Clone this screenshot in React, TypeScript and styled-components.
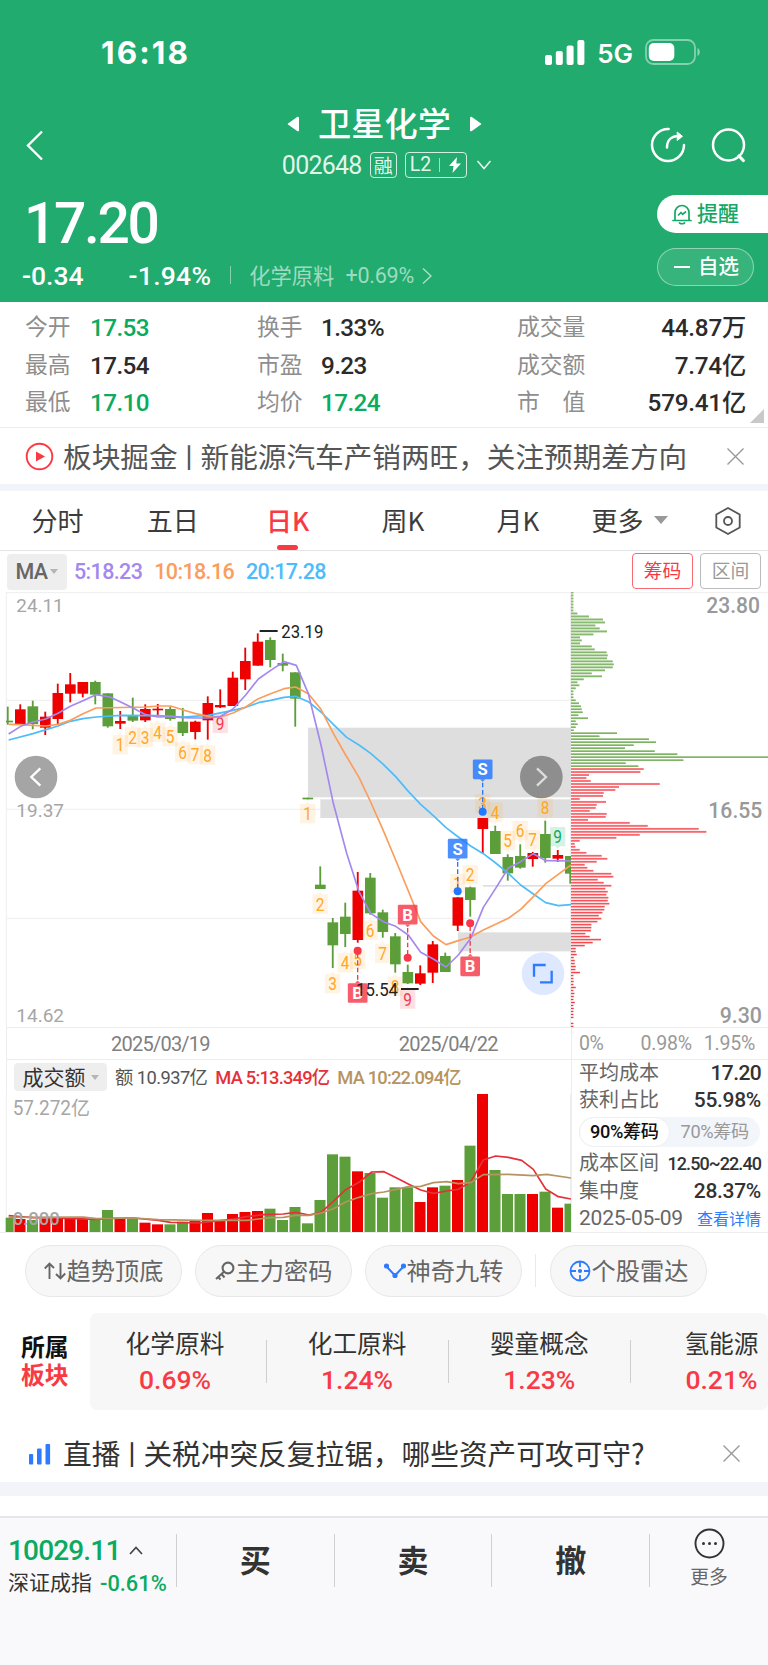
import React from 'react';
import styled, { createGlobalStyle } from 'styled-components';

const CJK = `"Noto Sans CJK SC", sans-serif`;
const DIGITS = `Roboto, "Noto Sans CJK SC", sans-serif`;

const C = {
  header: '#21ab6e',
  up: '#f93a45',
  down: '#0aab60',
  candleUp: '#ee0000',
  candleDown: '#5c9e3a',
  ink: '#333333',
  mid: '#666666',
  soft: '#8e8e8e',
  line: '#ededee',
  band: '#f2f4f9',
  blue: '#2e7bff',
  ma5: '#a488ee',
  ma10: '#fb9d5c',
  ma20: '#4cbcfb',
};

const GlobalStyle = createGlobalStyle`
  * { box-sizing: border-box; }
  body { margin: 0; background: #fff; }
  svg { display: block; flex: none; }
`;

const Screen = styled.div`
  width: 768px;
  height: 1665px;
  overflow: hidden;
  display: flex;
  flex-direction: column;
  background: #fff;
  font-family: ${CJK};
  color: ${C.ink};
  white-space: nowrap;
`;

const Num = styled.span<{ $size: number; $weight?: number; $color?: string; $ls?: number }>`
  font-family: ${DIGITS};
  font-size: ${(p) => p.$size}px;
  font-weight: ${(p) => p.$weight ?? 500};
  line-height: 1;
  letter-spacing: ${(p) => p.$ls ?? -0.03}em;
  color: ${(p) => p.$color ?? 'inherit'};
`;

/* ---------- header ---------- */

const Header = styled.header`
  height: 302px;
  background: ${C.header};
  color: #fff;
  display: flex;
  flex-direction: column;
`;

const StatusBar = styled.div`
  height: 104px;
  display: flex;
  justify-content: space-between;
  align-items: center;
  padding: 0 66px 0 101px;
  font-family: Inter, sans-serif;
`;

const Clock = styled.span`
  font-size: 31.5px;
  font-weight: 700;
  letter-spacing: 2.1px;
`;

const StatusRight = styled.div`
  display: flex;
  align-items: center;
`;

const Network = styled.span`
  font-size: 26px;
  font-weight: 600;
  margin: 2px 12px 0 12px;
`;

const NavBar = styled.div`
  height: 83px;
  display: flex;
  justify-content: space-between;
  align-items: stretch;
  padding: 0 22px 0 25px;
`;

const NavSide = styled.div`
  width: 96px;
  display: flex;
  align-items: center;
  justify-content: space-between;
  padding-bottom: 1px;
`;

const TitleBlock = styled.div`
  display: flex;
  flex-direction: column;
  align-items: center;
  margin-right: 2px;
`;

const TitleRow = styled.div`
  height: 40px;
  display: flex;
  align-items: center;
  gap: 18px;
  font-size: 33.2px;
  line-height: 40px;
  font-weight: 500;
`;

const TitleText = styled.span`
  margin-top: -4px;
`;

const CodeRow = styled.div`
  height: 42px;
  display: flex;
  align-items: center;
  gap: 8px;
  margin: 0 -5px 0 0;
`;

const Badge = styled.span<{ $pad: number }>`
  height: 26px;
  border: 1.3px solid rgba(255, 255, 255, 0.8);
  border-radius: 4px;
  display: flex;
  align-items: center;
  gap: 8px;
  padding: 0 ${(p) => p.$pad}px;
  font-size: 19px;
  line-height: 24px;
  color: rgba(255, 255, 255, 0.9);
`;

const BadgeRule = styled.i`
  width: 1px;
  height: 14px;
  background: rgba(255, 255, 255, 0.6);
`;

const ChevronSlot = styled.span`
  margin-left: 1px;
`;

const QuoteRow = styled.div`
  flex: 1;
  display: flex;
  justify-content: space-between;
`;

const Quote = styled.div`
  display: flex;
  flex-direction: column;
  padding-left: 22px;
`;

const Price = styled.div`
  height: 71px;
  display: flex;
  align-items: center;
  padding: 1px 0 0 2px;
`;

const ChangeRow = styled.div`
  height: 36px;
  display: flex;
  align-items: center;
`;

const Spacer = styled.i<{ $w: number }>`
  width: ${(p) => p.$w}px;
  flex: none;
`;

const FaintRule = styled.i`
  width: 1px;
  height: 18px;
  background: rgba(255, 255, 255, 0.45);
  margin: 0 18px 2px 19px;
`;

const Industry = styled.span`
  font-size: 21.3px;
  font-weight: 400;
  color: rgba(255, 255, 255, 0.58);
  margin-right: 11px;
  line-height: 28px;
  margin-bottom: 3px;
`;

const Actions = styled.div`
  width: 111px;
  display: flex;
  flex-direction: column;
  gap: 15px;
  padding-top: 8px;
`;

const AlertButton = styled.button`
  height: 38px;
  border: 0;
  border-radius: 19px 0 0 19px;
  background: #fff;
  color: #14a866;
  display: flex;
  align-items: center;
  gap: 5px;
  padding: 0 0 0 15px;
  font: 500 21px/34px ${CJK};
`;

const WatchButton = styled.button`
  width: 97px;
  height: 38px;
  border: 1.3px solid rgba(255, 255, 255, 0.45);
  border-radius: 19px;
  background: rgba(255, 255, 255, 0.1);
  color: #fff;
  display: flex;
  align-items: center;
  gap: 8px;
  padding: 0 0 0 16px;
  font: 500 20.5px/32px ${CJK};
`;

const ButtonText = styled.span`
  margin-top: -4px;
`;

const Dash = styled.i`
  width: 16px;
  height: 2px;
  background: #fff;
`;

/* ---------- statistics ---------- */

const Stats = styled.section`
  position: relative;
  height: 126px;
  border-bottom: 1px solid ${C.line};
  display: grid;
  grid-template-columns: 65px 167px 64px 196px 1fr;
  grid-auto-rows: 37.5px;
  padding: 6px 22px 0 25px;
`;

const StatLabel = styled.span`
  font-size: 22.8px;
  line-height: 35px;
  color: ${C.soft};
`;

const StatValue = styled.span<{ $tone?: string; $ls?: number }>`
  font: 500 24.3px/39px ${DIGITS};
  letter-spacing: ${(p) => p.$ls ?? -0.025}em;
  color: ${(p) => p.$tone ?? '#2b2b2b'};
`;

const LastCell = styled.span`
  display: flex;
  justify-content: space-between;
`;

const Corner = styled.i`
  position: absolute;
  right: 4px;
  bottom: 4px;
  border-left: 14px solid transparent;
  border-bottom: 14px solid #c9c9c9;
`;

/* ---------- notices ---------- */

const Notice = styled.div<{ $h: number; $tone: string; $top?: number; $size?: number }>`
  height: ${(p) => p.$h}px;
  display: flex;
  align-items: center;
  padding: ${(p) => p.$top ?? 0}px 0 0 25px;
  color: ${(p) => p.$tone};
  font-size: ${(p) => p.$size ?? 28.7}px;
  line-height: 40px;
`;

const NoticeIcon = styled.span`
  width: 38px;
  display: flex;
`;

const NoticeText = styled.span`
  flex: 1;
`;

const Bar = styled.span`
  display: inline-flex;
  justify-content: center;
  width: 23px;
  font-size: 27px;
`;

const CloseSlot = styled.span<{ $right: number }>`
  margin-right: ${(p) => p.$right}px;
`;

const Band = styled.div<{ $h: number }>`
  height: ${(p) => p.$h}px;
  background: ${C.band};
`;

/* ---------- tabs ---------- */

const Tabs = styled.nav`
  height: 60px;
  border-bottom: 1px solid #e4e4e6;
  display: flex;
`;

const Tab = styled.div<{ $active?: boolean }>`
  width: 115.1px;
  display: flex;
  flex-direction: column;
  align-items: center;
  justify-content: space-between;
  font-size: 26px;
  line-height: 58px;
  color: ${(p) => (p.$active ? C.up : '#3c3c3c')};
  font-weight: ${(p) => (p.$active ? 500 : 400)};
  &::after {
    content: '';
    width: 21px;
    height: 5px;
    flex: none;
    border-radius: 2.5px;
    background: ${(p) => (p.$active ? C.up : 'transparent')};
    margin-top: -4px;
  }
`;

const MoreTab = styled.div`
  margin-left: 16px;
  display: flex;
  align-items: center;
  gap: 11px;
  font-size: 26px;
  line-height: 56px;
  padding-bottom: 1px;
  color: #3c3c3c;
`;

const Caret = styled.i<{ $s: number; $tone: string }>`
  border: ${(p) => p.$s}px solid transparent;
  border-top: ${(p) => p.$s * 1.25}px solid ${(p) => p.$tone};
  border-bottom: 0;
`;

const TabTool = styled.div`
  margin: 16px 0 0 46px;
`;

/* ---------- moving average row ---------- */

const MaRow = styled.div`
  height: 41px;
  display: flex;
  align-items: center;
  padding: 0 7px;
`;

const Picker = styled.span<{ $w: number; $h: number }>`
  width: ${(p) => p.$w}px;
  height: ${(p) => p.$h}px;
  border-radius: 4px;
  background: #eeeeee;
  display: flex;
  align-items: center;
  justify-content: center;
  gap: 3px;
`;

const MaValues = styled.div`
  flex: 1;
  display: flex;
  gap: 12px;
  padding-left: 7px;
`;

const ToggleButton = styled.button<{ $tone: string; $text: string }>`
  width: 61px;
  height: 36px;
  margin: -1px 0 0 7px;
  padding: 0 0 2px;
  border: 1.3px solid ${(p) => p.$tone};
  border-radius: 4px;
  background: #fff;
  color: ${(p) => p.$text};
  font: 400 18.8px/30px ${CJK};
`;

/* ---------- chart area ---------- */

const ChartArea = styled.section`
  height: 641px;
  display: flex;
  border-bottom: 1px solid ${C.line};
`;

const ChartLeft = styled.div`
  width: 571px;
  display: flex;
  flex-direction: column;
`;

const ChartRight = styled.div`
  width: 197px;
  display: flex;
  flex-direction: column;
`;

const AxisRow = styled.div<{ $pad: string }>`
  height: 33px;
  margin-left: ${(p) => (p.$pad === 'left' ? 6 : 0)}px;
  border: 1px solid ${C.line};
  border-right: 0;
  display: flex;
  align-items: center;
  padding: 1px 0 0 ${(p) => (p.$pad === 'left' ? 104 : 7)}px;
`;

const VolumeHead = styled.div`
  height: 34px;
  margin-left: 6px;
  border-left: 1px solid ${C.line};
  display: flex;
  align-items: center;
  padding-left: 7px;
`;

const PickerText = styled.span`
  font-size: 21px;
  line-height: 26px;
  margin: -3px 2px 0 0;
  color: #333;
`;

const VolumeValues = styled.div`
  display: flex;
  gap: 8px;
  padding: 3px 0 0 8px;
`;

const CostPanel = styled.div`
  flex: 1;
  border-left: 1px solid ${C.line};
  padding: 0 7px 0 7px;
`;

const CostRow = styled.div<{ $h: number }>`
  height: ${(p) => p.$h}px;
  display: flex;
  justify-content: space-between;
  align-items: center;
`;

const CostLabel = styled.span`
  font-size: 20px;
  line-height: 24px;
  margin-top: -4px;
  color: ${C.mid};
`;

const Switch = styled.div`
  width: 181px;
  height: 30px;
  margin-top: -1px;
  border-radius: 15px;
  background: #f2f5f9;
  display: flex;
`;

const SwitchItem = styled.span<{ $on?: boolean }>`
  width: 90.5px;
  height: 30px;
  display: flex;
  align-items: center;
  justify-content: center;
  font: ${(p) => (p.$on ? 500 : 400)} 18.2px/28px ${DIGITS};
  letter-spacing: -0.02em;
  color: ${(p) => (p.$on ? '#111' : '#999')};
  background: ${(p) => (p.$on ? '#fff' : 'transparent')};
  border: ${(p) => (p.$on ? '1px solid #eceff3' : '0')};
  border-radius: 15px;
`;

const DetailLink = styled.a`
  font-size: 16px;
  line-height: 22px;
  margin-top: -2px;
  color: ${C.blue};
`;

/* ---------- chips, sectors, footer ---------- */

const ToolRow = styled.div`
  height: 80px;
  display: flex;
  align-items: flex-start;
  gap: 13px;
  padding: 12px 0 0 25px;
`;

const Tool = styled.button`
  width: 157px;
  height: 52px;
  padding: 0;
  border: 1px solid #e8e8e8;
  border-radius: 26px;
  background: #f7f7f7;
  color: ${C.mid};
  display: flex;
  align-items: center;
  justify-content: center;
  gap: 1px;
  font: 400 24.2px/46px ${CJK};
`;

const ToolText = styled.span`
  margin-top: -3px;
`;

const ToolRule = styled.i`
  width: 1px;
  height: 33px;
  margin: 9px 1px 0 0;
  background: #e9e9e9;
`;

const SectorRow = styled.div`
  height: 97px;
  display: flex;
  align-items: center;
`;

const SectorTitle = styled.div`
  width: 90px;
  padding: 0 0 3px 21px;
  font-size: 23.8px;
  line-height: 28.5px;
  font-weight: 700;
  color: #111;
`;

const RedText = styled.div`
  color: ${C.up};
`;

const SectorCard = styled.div`
  width: 678px;
  height: 97px;
  overflow: hidden;
  border-radius: 7px;
  background: #f7f7f7;
  display: flex;
`;

const Sector = styled.div<{ $first?: boolean }>`
  position: relative;
  flex: none;
  width: ${(p) => (p.$first ? 177 : 182.2)}px;
  padding: 11px ${(p) => (p.$first ? 7 : 2)}px 0 0;
  display: flex;
  flex-direction: column;
  align-items: center;
  gap: 7px;
  font-size: 24.7px;
  line-height: 36px;
  &::after {
    content: '';
    position: absolute;
    right: 0;
    top: 27px;
    width: 1px;
    height: 43px;
    background: #cfcfcf;
  }
`;

const Footer = styled.footer`
  flex: 1;
  margin-top: 20px;
  border-top: 2px solid #e6e6ea;
  background: #f9f9fc;
  display: flex;
  align-items: flex-start;
`;

const IndexBox = styled.div`
  width: 176px;
  padding: 16px 0 0 8px;
`;

const IndexLine = styled.div<{ $gap: number }>`
  height: 33px;
  display: flex;
  align-items: center;
  gap: ${(p) => p.$gap}px;
`;

const IndexName = styled.span`
  font-size: 21px;
  line-height: 30px;
  margin-top: -5px;
`;

const TradeButton = styled.button`
  width: 157.7px;
  height: 53px;
  margin-top: 16px;
  padding: 0 0 4px;
  border: 0;
  border-left: 1px solid #d0d0d3;
  background: none;
  color: ${C.ink};
  font: 700 31px/48px ${CJK};
`;

const MoreButton = styled.div`
  flex: 1;
  height: 53px;
  margin-top: 16px;
  border-left: 1px solid #d0d0d3;
`;

const MoreInner = styled.div`
  margin-top: -6px;
  display: flex;
  flex-direction: column;
  align-items: center;
  gap: 4px;
  font-size: 18.8px;
  line-height: 26px;
  color: ${C.mid};
`;

/* ---------- chart data: three drawing units per pixel ---------- */

const STEP = 37.5;
const X0 = 24;
const cx = (i: number) => X0 + i * STEP;

type Candle = ['r' | 'g', number, number, number, number];

// colour, body top, body bottom, high, low
const candles: Candle[] = [
  ['g', 392, 397, 350, 404], ['r', 358, 402, 343, 402], ['g', 349, 402, 332, 418], ['r', 380, 413, 365, 435],
  ['r', 309, 387, 281, 402], ['r', 283, 311, 249, 337], ['r', 276, 311, 276, 322], ['g', 276, 314, 272, 343],
  ['g', 310, 409, 310, 413], ['r', 393, 401, 363, 417], ['g', 378, 392, 323, 396], ['r', 357, 391, 343, 396],
  ['r', 356, 361, 342, 376], ['g', 357, 387, 350, 392], ['g', 395, 429, 354, 438], ['r', 395, 426, 392, 448],
  ['r', 339, 391, 319, 449], ['r', 345, 352, 298, 354], ['r', 263, 348, 245, 348], ['r', 213, 268, 173, 300],
  ['r', 155, 227, 130, 227], ['g', 150, 210, 142, 232], ['g', 219, 227, 191, 244], ['g', 247, 326, 247, 410],
  ['g', 623, 628, 623, 628], ['g', 884, 897, 829, 897], ['g', 997, 1066, 984, 1134], ['g', 980, 1032, 938, 1071],
  ['r', 902, 1050, 846, 1058], ['g', 863, 970, 849, 974], ['g', 967, 1026, 959, 1043], ['g', 1039, 1123, 1029, 1148],
  ['g', 1146, 1180, 1124, 1182], ['r', 1150, 1181, 1126, 1185], ['r', 1063, 1148, 1053, 1179], ['g', 1098, 1146, 1088, 1146],
  ['r', 922, 1007, 922, 1023], ['g', 892, 930, 890, 980], ['r', 684, 717, 684, 789], ['g', 723, 792, 707, 792],
  ['g', 801, 850, 793, 872], ['g', 798, 833, 763, 836], ['r', 789, 807, 786, 830], ['g', 732, 804, 692, 818],
  ['r', 795, 806, 780, 816], ['g', 798, 851, 798, 881],
];

const ma5 =
  '26,432 62,409 99,396 137,387 174,370 211,349 249,332 288,314 330,321 362,336 399,354 437,374 475,381 512,379 550,383 587,384 624,384 662,379 699,357 737,315 775,267 812,241 852,215 889,226 925,311 963,465 1000,640 1040,790 1077,905 1112,970 1150,995 1187,1009 1225,1035 1262,1087 1300,1107 1338,1131 1375,1095 1412,1045 1450,952 1487,895 1525,834 1562,815 1600,791 1638,812 1713,813';
const ma10 =
  '26,403 62,404 99,406 137,408 174,403 211,391 249,371 288,354 437,351 475,348 512,348 550,360 587,371 624,379 662,381 699,369 737,351 775,326 812,311 852,296 887,291 925,311 963,358 1000,430 1037,495 1077,562 1112,636 1150,722 1187,810 1225,903 1262,995 1300,1038 1338,1064 1375,1052 1412,1041 1450,1020 1525,985 1562,958 1600,920 1638,880 1713,825';
const ma20 =
  '26,450 99,431 174,408 211,394 249,386 288,381 362,376 475,377 550,381 624,376 699,361 737,352 775,338 812,331 852,322 887,319 925,335 963,366 1000,403 1040,442 1077,465 1112,490 1150,523 1187,560 1225,604 1262,643 1300,677 1338,713 1375,741 1412,768 1450,791 1487,819 1525,850 1562,885 1600,912 1637,938 1675,947 1713,944';

const TAGS = {
  o: ['#ffa726', 'rgba(255, 160, 50, 0.13)'],
  r: ['#f2374a', 'rgba(245, 60, 80, 0.16)'],
  g: ['#0aab60', 'rgba(10, 171, 96, 0.16)'],
};

type Tag = [number, string, number, number, keyof typeof TAGS];

// candle index, count, centre y, arrow direction, tone
const tags: Tag[] = [
  [9, '1', 464, -1, 'o'], [10, '2', 441, -1, 'o'], [11, '3', 443, -1, 'o'], [12, '4', 427, -1, 'o'], [13, '5', 440, -1, 'o'],
  [14, '6', 486, -1, 'o'], [15, '7', 494, -1, 'o'], [16, '8', 495, -1, 'o'], [17, '9', 400, -1, 'r'],
  [24, '1', 671, -1, 'o'], [25, '2', 942, -1, 'o'], [26, '3', 1181, -1, 'o'], [27, '4', 1118, -1, 'o'], [28, '5', 1108, -1, 'o'],
  [29, '6', 1021, -1, 'o'], [30, '7', 1090, -1, 'o'], [31, '8', 1189, -1, 'o'], [32, '9', 1227, -1, 'r'],
  [36, '1', 880, 1, 'o'], [37, '2', 854, 1, 'o'], [38, '3', 641, 1, 'o'], [39, '4', 666, 1, 'o'], [40, '5', 751, 1, 'o'],
  [41, '6', 722, 1, 'o'], [42, '7', 749, 1, 'o'], [43, '8', 653, 1, 'o'], [44, '9', 740, 1, 'g'],
];

type Trade = ['B' | 'S', number, number, number];

// side, candle index, flag centre y, dot y
const trades: Trade[] = [
  ['B', 28, 1209, 1082], ['B', 32, 974, 1103], ['S', 36, 776, 904], ['B', 37, 1129, 1000], ['S', 38, 538, 665],
];

const greenChips = [
  7, 7, 7, 7, 7, 7, 7, 19, 54, 96, 102, 73, 86, 108, 67, 27, 32, 27, 62, 71, 107, 110, 108, 125, 128, 125, 102, 62, 93, 38,
  19, 25, 14, 7, 7, 7, 14, 24, 30, 32, 35, 22, 51, 14, 20, 14, 8, 138, 85, 234, 255, 188, 162, 251, 319, 591, 337, 164, 202,
];
const redChips = [
  218, 208, 54, 46, 59, 266, 144, 133, 98, 96, 26, 105, 77, 74, 56, 107, 104, 51, 176, 230, 383, 406, 206, 136, 26, 11, 13,
  26, 46, 92, 109, 77, 41, 49, 67, 121, 127, 80, 98, 121, 103, 110, 106, 112, 110, 115, 101, 100, 94, 83, 91, 79, 61, 61, 60,
  43, 56, 90, 65, 41, 14, 14, 17, 8, 11, 11, 14, 13, 27, 7, 7, 8, 7, 14, 7, 10, 8, 7, 11, 7, 8, 7, 7, 7, 0, 7, 7,
];

type Volume = ['r' | 'g', number];

// colour, top edge
const volumes: Volume[] = [
  ['g', 563], ['r', 567], ['g', 570], ['r', 567], ['r', 567], ['r', 567], ['r', 567], ['g', 567], ['g', 540], ['r', 567],
  ['g', 567], ['r', 578], ['r', 583], ['g', 583], ['g', 575], ['r', 571], ['r', 549], ['r', 570], ['r', 552], ['r', 546],
  ['r', 543], ['g', 536], ['g', 570], ['g', 531], ['g', 580], ['g', 510], ['g', 373], ['g', 380], ['r', 424], ['g', 429],
  ['g', 503], ['g', 472], ['g', 472], ['r', 516], ['r', 472], ['g', 467], ['r', 450], ['g', 347], ['r', 192], ['g', 420],
  ['g', 492], ['g', 492], ['r', 492], ['g', 485], ['r', 533], ['g', 521],
];

const vma5 =
  '26,557 60,560 100,563 200,565 290,568 330,565 400,564 475,571 512,577 600,579 640,574 700,567 740,560 790,554 850,552 887,547 927,555 963,547 1000,514 1037,479 1077,457 1115,426 1152,425 1190,444 1225,462 1262,480 1300,490 1340,483 1375,478 1412,456 1450,390 1487,378 1525,382 1565,391 1600,418 1637,477 1675,500 1713,507';
const vma10 =
  '26,562 250,561 290,566 400,564 475,569 600,571 740,571 812,563 850,562 887,556 927,556 963,549 1000,536 1037,516 1077,502 1115,491 1152,486 1190,478 1225,470 1262,469 1300,458 1340,455 1375,461 1412,458 1450,434 1525,433 1600,437 1640,433 1713,444';

/* ---------- chart parts ---------- */

const ChartText = ({ x, y, w, fill, children, size = 56, weight = 500, opacity = 1 }: {
  x: number; y: number; w: number; fill: string; children: string; size?: number; weight?: number; opacity?: number;
}) => (
  <text x={x} y={y + size * 0.35} fontFamily={DIGITS} fontSize={size} fontWeight={weight} fill={fill} opacity={opacity}
    textLength={w} lengthAdjust="spacingAndGlyphs">
    {children}
  </text>
);

const Line = ({ points, color }: { points: string; color: string }) => (
  <polyline points={points} fill="none" stroke={color} strokeWidth={5} strokeLinejoin="round" />
);

const PriceChart = () => (
  <svg width="571" height="435" viewBox="0 6 1713 1305">
    <g stroke="#eeeeee" strokeWidth={3}>
      <path d="M18 8H1713M18 331H1713M18 658H1713M18 985H1713M19 6V1311M1711.5 6V1311" fill="none" />
    </g>
    <g fill="#dedede">
      <rect x={924} y={413} width={789} height={209} />
      <rect x={961} y={628} width={752} height={56} />
      <rect x={1449} y={885} width={264} height={5} />
      <rect x={1374} y={1027} width={339} height={57} />
    </g>
    {candles.map(([side, top, bottom, high, low], i) => (
      <g key={i} fill={side === 'r' ? C.candleUp : C.candleDown}>
        <rect x={Math.max(cx(i) - 16.5, 18)} y={top} width={i === 0 ? 21 : 32} height={bottom - top} />
        <rect x={cx(i) - 3.5} y={high} width={5.5} height={low - high} />
      </g>
    ))}
    {tags.map(([i, label, y, dir, tone]) => (
      <g key={i}>
        <path
          d={`M${cx(i) - 24} ${y - 29}h${46}v58h-46zM${cx(i) - 8} ${y + dir * 29}l7 ${dir * 7}l7 ${-dir * 7}z`}
          fill={TAGS[tone][1]}
        />
        <ChartText x={cx(i) - 14} y={y} w={26} weight={400} fill={TAGS[tone][0]}>{label}</ChartText>
      </g>
    ))}
    <Line points={ma20} color={C.ma20} />
    <Line points={ma10} color={C.ma10} />
    <Line points={ma5} color={C.ma5} />
    {trades.map(([side, i, y, dot]) => {
      const color = side === 'B' ? '#f5384a' : '#2478ff';
      const dir = dot > y ? 1 : -1;
      const x = cx(i) - 1;
      return (
        <g key={side + i}>
          <path d={`M${x} ${y + dir * 40}V${dot}`} stroke={color} strokeWidth={4} strokeDasharray="14 8" />
          <circle cx={x} cy={dot} r={12} fill={color} />
          <rect x={x - 29.5} y={y - 29.5} width={59} height={59} rx={4} fill={color} opacity={0.82} />
          <path d={`M${x - 8} ${y + dir * 29.5}l8 ${dir * 8}l8 ${-dir * 8}z`} fill={color} opacity={0.82} />
          <text x={x} y={y + 18} textAnchor="middle" fontFamily={DIGITS} fontSize={50} fontWeight={700} fill="#fff">{side}</text>
        </g>
      );
    })}
    <path d="M779 123H833M1203 1197H1256" stroke="#222" strokeWidth={6} />
    <ChartText x={844} y={125} w={126} fill="#222" weight={400}>23.19</ChartText>
    <ChartText x={1068} y={1199} w={126} fill="#222" weight={400}>15.54</ChartText>
    <ChartText x={49} y={45} w={142} fill="#a6a6a6" weight={400}>24.11</ChartText>
    <ChartText x={49} y={660} w={143} fill="#a6a6a6" weight={400}>19.37</ChartText>
    <ChartText x={49} y={1276} w={143} fill="#a6a6a6" weight={400}>14.62</ChartText>
    <circle cx={108} cy={561} r={64} fill="#a5a5a5" />
    <path d="M121 535L94 561L121 587" fill="none" stroke="#fff" strokeWidth={7} />
    <circle cx={1624} cy={561} r={64} fill="#8e8e8e" />
    <path d="M1611 535L1638 561L1611 587" fill="none" stroke="#ddd" strokeWidth={7} />
    <circle cx={1629} cy={1151} r={64} fill="#dee8fe" />
    <path d="M1602 1160V1125H1637M1620 1177H1655V1142" fill="none" stroke={C.blue} strokeWidth={7} />
  </svg>
);

const ChipChart = () => (
  <svg width="197" height="435" viewBox="1713 6 591 1305">
    <path d="M1713 8H2304" stroke="#eeeeee" strokeWidth={3} />
    {[...greenChips, ...redChips].map((w, i) => {
      const green = i < greenChips.length;
      const y = 7 + i * 8.98;
      return (
        <g key={i}>
          <rect x={1713} y={y - 3} width={w} height={6} fill={green ? '#a9cc95' : '#fbb4b7'} />
          <rect x={1713} y={y - (green ? 0 : 1.2)} width={w} height={3} fill={green ? '#7db364' : '#f2383f'} />
        </g>
      );
    })}
    <ChartText x={2119} y={46} w={161} size={64} fill="#999">23.80</ChartText>
    <ChartText x={2125} y={661} w={162} size={64} fill="#999">16.55</ChartText>
    <ChartText x={2159} y={1277} w={127} size={64} fill="#999">9.30</ChartText>
  </svg>
);

const VolumeChart = () => (
  <svg width="571" height="138" viewBox="0 192 1713 414">
    <path d="M19 192V606M1711.5 192V606" stroke="#eeeeee" strokeWidth={3} />
    {volumes.map(([side, top], i) => (
      <rect key={i} x={Math.max(cx(i) - 18, 17)} y={top} width={i === 0 ? 24 : 33} height={606 - top}
        fill={side === 'r' ? C.candleUp : C.candleDown} />
    ))}
    <Line points={vma5} color="#e5303a" />
    <Line points={vma10} color="#b59461" />
    <ChartText x={38} y={235} w={232} fill="#a6a6a6" weight={400} size={58}>57.272亿</ChartText>
    <ChartText x={38} y={566} w={141} fill="#a6a6a6" weight={500}>0.000</ChartText>
  </svg>
);

const Cross = () => (
  <svg width="17" height="17" viewBox="0 0 17 17" stroke="#999" strokeWidth="1.4">
    <path d="M.5 .5l16 16M16.5 .5l-16 16" />
  </svg>
);

const sectors = [
  ['化学原料', '0.69%'],
  ['化工原料', '1.24%'],
  ['婴童概念', '1.23%'],
  ['氢能源', '0.21%'],
];

const stats: [string, string, string?][][] = [
  [['今开', '17.53', C.down], ['换手', '1.33%'], ['成交量', '44.87万']],
  [['最高', '17.54'], ['市盈', '9.23'], ['成交额', '7.74亿']],
  [['最低', '17.10', C.down], ['均价', '17.24', C.down], ['市　值', '579.41亿']],
];

export default function App() {
  return (
    <Screen>
      <GlobalStyle />
      <Header>
        <StatusBar>
          <Clock>16:18</Clock>
          <StatusRight>
            <svg width="40" height="25" viewBox="0 0 40 25" fill="#fff">
              <rect x="0" y="15" width="7" height="10" rx="2" />
              <rect x="10.8" y="11" width="7" height="14" rx="2" />
              <rect x="21.6" y="5.5" width="7" height="19.5" rx="2" />
              <rect x="32.4" y="0" width="7" height="25" rx="2" />
            </svg>
            <Network>5G</Network>
            <svg width="57" height="26" viewBox="0 0 57 26">
              <rect x="1" y="1" width="49" height="24" rx="7.5" fill="none" stroke="#fff" strokeOpacity=".45" strokeWidth="1.8" />
              <rect x="3.8" y="4" width="25.5" height="18" rx="5" fill="#fff" />
              <path d="M52.5 9c3 1.5 3 6.5 0 8z" fill="#fff" fillOpacity=".5" />
            </svg>
          </StatusRight>
        </StatusBar>
        <NavBar>
          <NavSide>
            <svg width="20" height="31" viewBox="0 0 20 31" fill="none" stroke="#fff" strokeWidth="2.4">
              <path d="M17 1.5L3 15.5L17 29.5" />
            </svg>
          </NavSide>
          <TitleBlock>
            <TitleRow>
              <svg width="13" height="16" viewBox="0 0 13 16" fill="#fff"><path d="M12 1.5v13q-.3 1.2-1.5.7L1 8.6q-.8-.6 0-1.2L10.5.8q1.2-.5 1.5.7z" /></svg>
              <TitleText>卫星化学</TitleText>
              <svg width="13" height="16" viewBox="0 0 13 16" fill="#fff"><path d="M1 1.5v13q.3 1.2 1.5.7L12 8.6q.8-.6 0-1.2L2.5.8Q1.3.3 1 1.5z" /></svg>
            </TitleRow>
            <CodeRow>
              <Num $size={25} $weight={400} $color="rgba(255,255,255,.88)">002648</Num>
              <Badge $pad={3}>融</Badge>
              <Badge $pad={4}>
                <Num $size={19.5} $weight={400} $ls={0}>L2</Num>
                <BadgeRule />
                <svg width="14" height="16" viewBox="0 0 12 16" fill="#fff"><path d="M8 0L0 9h4.5L3.5 16L12 6.5H7.3z" /></svg>
              </Badge>
              <ChevronSlot>
                <svg width="16" height="10" viewBox="0 0 16 10" fill="none" stroke="#fff" strokeOpacity=".9" strokeWidth="1.5"><path d="M1.5 1L8 8.5L14.5 1" /></svg>
              </ChevronSlot>
            </CodeRow>
          </TitleBlock>
          <NavSide>
            <svg width="36" height="36" viewBox="0 0 36 36" fill="none" stroke="#fff" strokeWidth="2.5" strokeLinecap="round">
              <path d="M18.6 2A16 16 0 1 0 34 18" />
              <path d="M17 20.500c0-7 4-11.500 12-11.500" />
              <path d="M27.5 5.3l5 4l-5 4z" fill="#fff" strokeWidth="1" strokeLinejoin="round" />
            </svg>
            <svg width="36" height="36" viewBox="0 0 36 36" fill="none" stroke="#fff" strokeWidth="2.5" strokeLinecap="round">
              <circle cx="18.5" cy="18" r="15.5" />
              <path d="M29 29l4.3 4.5" strokeWidth="3.2" />
            </svg>
          </NavSide>
        </NavBar>
        <QuoteRow>
          <Quote>
            <Price><Num $size={57} $ls={-0.042}>17.20</Num></Price>
            <ChangeRow>
              <Num $size={26.5} $ls={0}>-0.34</Num>
              <Spacer $w={45} />
              <Num $size={26.5} $ls={0.01}>-1.94%</Num>
              <FaintRule />
              <Industry>化学原料</Industry>
              <Num $size={21.5} $weight={400} $ls={-0.01} $color="rgba(255,255,255,.58)">+0.69%</Num>
              <Spacer $w={8} />
              <svg width="10" height="16" viewBox="0 0 10 16" fill="none" stroke="#fff" strokeOpacity=".65" strokeWidth="1.3"><path d="M1 .5L9 8L1 15.5" /></svg>
            </ChangeRow>
          </Quote>
          <Actions>
            <AlertButton>
              <svg width="20" height="21" viewBox="0 0 20 21" fill="none" stroke="#14a866" strokeWidth="1.7" strokeLinejoin="round" strokeLinecap="round">
                <path d="M1 16.5h18M3 16V8.5a7 7 0 0 1 14 0V16M7.5 19q2.5 1.5 5 0" />
                <path d="M6.5 11L9 8.5l1.5 1.8L13.5 8" />
              </svg>
              <ButtonText>提醒</ButtonText>
            </AlertButton>
            <WatchButton><Dash /><ButtonText>自选</ButtonText></WatchButton>
          </Actions>
        </QuoteRow>
      </Header>

      <Stats>
        {stats.map(([a, b, c]) => (
          <React.Fragment key={a[0]}>
            <StatLabel>{a[0]}</StatLabel>
            <StatValue $tone={a[2]}>{a[1]}</StatValue>
            <StatLabel>{b[0]}</StatLabel>
            <StatValue $tone={b[2]}>{b[1]}</StatValue>
            <LastCell>
              <StatLabel>{c[0]}</StatLabel>
              <StatValue $ls={-0.01}>{c[1]}</StatValue>
            </LastCell>
          </React.Fragment>
        ))}
        <Corner />
      </Stats>

      <Notice $h={56} $tone="#555" $size={28.63}>
        <NoticeIcon>
          <svg width="29" height="29" viewBox="0 0 29 29">
            <circle cx="14.5" cy="14.5" r="12.8" fill="none" stroke={C.up} strokeWidth="1.9" />
            <path d="M11 9.5v10l9-5z" fill={C.up} />
          </svg>
        </NoticeIcon>
        <NoticeText>板块掘金<Bar>丨</Bar>新能源汽车产销两旺，关注预期差方向</NoticeText>
        <CloseSlot $right={24}><Cross /></CloseSlot>
      </Notice>
      <Band $h={7} />

      <Tabs>
        <Tab>分时</Tab>
        <Tab>五日</Tab>
        <Tab $active>日K</Tab>
        <Tab>周K</Tab>
        <Tab>月K</Tab>
        <MoreTab>更多<Caret $s={7} $tone="#999" /></MoreTab>
        <TabTool>
          <svg width="28" height="28" viewBox="0 0 28 28" fill="none" stroke="#555" strokeWidth="1.8" strokeLinejoin="round">
            <path d="M14 1L25.7 7.5V20.5L14 27L2.3 20.5V7.5z" />
            <circle cx="14" cy="14" r="4" />
          </svg>
        </TabTool>
      </Tabs>

      <MaRow>
        <Picker $w={60} $h={36}>
          <Num $size={21.5} $color={C.mid}>MA</Num>
          <Caret $s={4.5} $tone="#b5b5b5" />
        </Picker>
        <MaValues>
          <Num $size={21.5} $color={C.ma5}>5:18.23</Num>
          <Num $size={21.5} $color={C.ma10}>10:18.16</Num>
          <Num $size={21.5} $color={C.ma20}>20:17.28</Num>
        </MaValues>
        <ToggleButton $tone="#f96a73" $text={C.up}>筹码</ToggleButton>
        <ToggleButton $tone="#bbbbbb" $text="#999">区间</ToggleButton>
      </MaRow>

      <ChartArea>
        <ChartLeft>
          <PriceChart />
          <AxisRow $pad="left">
            <Num $size={20} $weight={400} $ls={-0.038} $color="#808080">2025/03/19</Num>
            <Spacer $w={189} />
            <Num $size={20} $weight={400} $ls={-0.038} $color="#808080">2025/04/22</Num>
          </AxisRow>
          <VolumeHead>
            <Picker $w={93} $h={28}>
              <PickerText>成交额</PickerText>
              <Caret $s={4.5} $tone="#b5b5b5" />
            </Picker>
            <VolumeValues>
              <Num $size={18.3} $weight={400} $color="#555">额 10.937亿</Num>
              <Num $size={18.3} $ls={-0.043} $color="#e5303a">MA 5:13.349亿</Num>
              <Num $size={18.3} $ls={-0.043} $color="#b59461">MA 10:22.094亿</Num>
            </VolumeValues>
          </VolumeHead>
          <VolumeChart />
        </ChartLeft>
        <ChartRight>
          <ChipChart />
          <AxisRow $pad="right">
            <Num $size={19.5} $weight={400} $ls={-0.02} $color="#999">0%</Num>
            <Spacer $w={37} />
            <Num $size={19.5} $weight={400} $ls={-0.01} $color="#999">0.98%</Num>
            <Spacer $w={12} />
            <Num $size={19.5} $weight={400} $ls={-0.01} $color="#999">1.95%</Num>
          </AxisRow>
          <CostPanel>
            <CostRow $h={27}><CostLabel>平均成本</CostLabel><Num $size={21}>17.20</Num></CostRow>
            <CostRow $h={27}><CostLabel>获利占比</CostLabel><Num $size={21} $ls={-0.015}>55.98%</Num></CostRow>
            <CostRow $h={36}>
              <Switch>
                <SwitchItem $on>90%筹码</SwitchItem>
                <SwitchItem>70%筹码</SwitchItem>
              </Switch>
            </CostRow>
            <CostRow $h={28}><CostLabel>成本区间</CostLabel><Num $size={18} $ls={-0.052}>12.50~22.40</Num></CostRow>
            <CostRow $h={27}><CostLabel>集中度</CostLabel><Num $size={21} $ls={-0.015}>28.37%</Num></CostRow>
            <CostRow $h={27}><Num $size={21} $weight={400} $ls={-0.01} $color="#666">2025-05-09</Num><DetailLink>查看详情</DetailLink></CostRow>
          </CostPanel>
        </ChartRight>
      </ChartArea>

      <ToolRow>
        <Tool>
          <svg width="22" height="18" viewBox="0 0 22 18" fill="none" stroke="#666" strokeWidth="1.9">
            <path d="M.8 6.5L5.5 1.5L10 6M5.5 1.5V17M12 12l4.5 4.5L21.2 11.5M16.5 16.5V1" />
          </svg>
          <ToolText>趋势顶底</ToolText>
        </Tool>
        <Tool>
          <svg width="20" height="20" viewBox="0 0 20 20" fill="none" stroke="#666" strokeWidth="2.1">
            <circle cx="13" cy="7" r="5.4" />
            <path d="M9 10.8L1 18M6.5 13l3 3.5M3.2 16l2.3 2.500" />
          </svg>
          <ToolText>主力密码</ToolText>
        </Tool>
        <Tool>
          <svg width="22" height="16" viewBox="0 0 22 16" fill={C.blue} stroke={C.blue} strokeWidth="2">
            <path d="M2.5 3.5L11 12.5L19.5 3.5" fill="none" />
            <circle cx="2.5" cy="3" r="1.6" /><circle cx="11" cy="12.5" r="1.6" /><circle cx="19.5" cy="3" r="1.6" />
          </svg>
          <ToolText>神奇九转</ToolText>
        </Tool>
        <ToolRule />
        <Tool>
          <svg width="22" height="22" viewBox="0 0 22 22" fill="none" stroke={C.blue} strokeWidth="1.8">
            <circle cx="11" cy="11" r="9.5" />
            <path d="M11 1v6M11 15v6M1 11h6M15 11h6" />
            <circle cx="11" cy="11" r="1.2" fill={C.blue} />
          </svg>
          <ToolText>个股雷达</ToolText>
        </Tool>
      </ToolRow>

      <SectorRow>
        <SectorTitle>所属<RedText>板块</RedText></SectorTitle>
        <SectorCard>
          {sectors.map(([name, pct], i) => (
            <Sector key={name} $first={i === 0}>
              {name}
              <Num $size={26.5} $ls={0} $color={C.up}>{pct}</Num>
            </Sector>
          ))}
        </SectorCard>
      </SectorRow>

      <Notice $h={72} $tone="#333" $top={15}>
        <NoticeIcon>
          <svg width="27" height="22" viewBox="0 0 27 22" fill={C.blue}>
            <rect x="4" y="11" width="4.2" height="10.5" rx="1" />
            <rect x="12" y="5.5" width="4.6" height="16" rx="1" />
            <rect x="20.5" y="1" width="4.6" height="20.5" rx="1" />
          </svg>
        </NoticeIcon>
        <NoticeText>直播<Bar>丨</Bar>关税冲突反复拉锯，哪些资产可攻可守?</NoticeText>
        <CloseSlot $right={28}><Cross /></CloseSlot>
      </Notice>
      <Band $h={14} />

      <Footer>
        <IndexBox>
          <IndexLine $gap={9}>
            <Num $size={28} $color={C.down}>10029.11</Num>
            <svg width="14" height="9" viewBox="0 0 14 9" fill="none" stroke="#444" strokeWidth="1.7"><path d="M1 8L7 1.5L13 8" /></svg>
          </IndexLine>
          <IndexLine $gap={8}>
            <IndexName>深证成指</IndexName>
            <Num $size={21.8} $ls={0} $color={C.down}>-0.61%</Num>
          </IndexLine>
        </IndexBox>
        <TradeButton>买</TradeButton>
        <TradeButton>卖</TradeButton>
        <TradeButton>撤</TradeButton>
        <MoreButton>
          <MoreInner>
            <svg width="31" height="31" viewBox="0 0 31 31" fill="#333">
              <circle cx="15.5" cy="15.5" r="14" fill="none" stroke="#333" strokeWidth="1.9" />
              <circle cx="9.5" cy="15.5" r="1.5" /><circle cx="15.5" cy="15.5" r="1.5" /><circle cx="21.5" cy="15.5" r="1.5" />
            </svg>
            更多
          </MoreInner>
        </MoreButton>
      </Footer>
    </Screen>
  );
}
